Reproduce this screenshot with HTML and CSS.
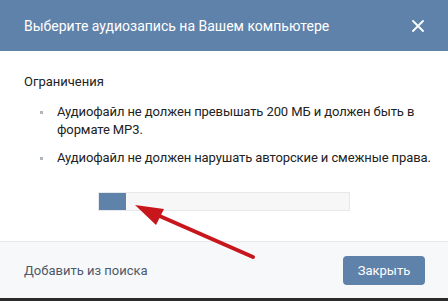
FILE: index.html
```html
<!DOCTYPE html>
<html lang="ru">
<head>
  <meta charset="UTF-8">
  <title>Выберите аудиозапись</title>
  <link rel="stylesheet" href="styles.css">
</head>
<body>

  <div class="box">
    <div class="box-header">
      <span class="box-title">Выберите аудиозапись на Вашем компьютере</span>
      <svg class="box-close" width="12" height="12" viewBox="0 0 12 12">
        <path d="M1 1 L11 11 M11 1 L1 11" stroke="#fff" stroke-width="1.8" stroke-linecap="round"/>
      </svg>
    </div>

    <div class="box-body">
      <div class="limits-title">Ограничения</div>
      <ul class="limits">
        <li>Аудиофайл не должен превышать 200 МБ и должен быть в формате MP3.</li>
        <li>Аудиофайл не должен нарушать авторские и смежные права.</li>
      </ul>
      <div class="upload-bar">
        <div class="upload-fill" style="width: 27px;"></div>
      </div>
    </div>

    <div class="box-footer">
      <a class="footer-link" href="#">Добавить из поиска</a>
      <button class="close-button">Закрыть</button>
    </div>

    <!-- red pointer arrow drawn over the dialog -->
    <svg class="pointer" width="448" height="301" viewBox="0 0 448 301">
      <line x1="253" y1="257" x2="155" y2="214" stroke="#c8161d" stroke-width="4" stroke-linecap="round"/>
      <polygon points="135,205 164,209 156,225" fill="#c8161d"/>
    </svg>
  </div>

</body>
</html>
```

FILE: styles.css
```css
body {
  margin: 0;
  padding: 0;
  background-color: #2b2b2b;
  font-family: Roboto, "Open Sans", Arial, sans-serif;
  font-size: 13px;
  color: #222;
}
.box {
  position: relative;
  width: 448px;
  height: 298px;
  background-color: white;
  display: flex;
  flex-direction: column;
}
.box-header {
  height: 51px;
  background-color: #5f82aa;
  display: flex;
  align-items: center;
  justify-content: space-between;
  padding: 0 24px;
}
.box-title {
  color: white;
  font-size: 14px;
}
.box-body {
  flex: 1;
  padding: 22px 8px 0 24px;
  line-height: 18px;
}
.limits-title {
  margin-bottom: 12px;
}
.limits {
  list-style: none;
  margin: 0;
  padding: 0 0 0 33px;
  letter-spacing: -0.1px;
}
.limits li {
  position: relative;
  margin-bottom: 10px;
}
.limits li::before {
  content: "";
  position: absolute;
  left: -17px;
  top: 8px;
  width: 3px;
  height: 3px;
  background-color: #b0b6bd;
}
.upload-bar {
  margin: 25px 0 0 74px;
  width: 250px;
  height: 17px;
  border: 1px solid #e7e8ec;
  background-color: #f7f7f7;
}
.upload-fill {
  height: 100%;
  background-color: #5f82aa;
}
.box-footer {
  height: 56px;
  border-top: 1px solid #e7e8ec;
  background-color: #f7f8fa;
  display: flex;
  align-items: center;
  justify-content: space-between;
  padding: 0 23px 0 24px;
}
.footer-link {
  color: #4c5a6b;
  text-decoration: none;
}
.close-button {
  width: 82px;
  height: 29px;
  background-color: #5f82aa;
  color: white;
  border: none;
  border-radius: 4px;
  font-family: inherit;
  font-size: 13px;
  cursor: pointer;
}
.pointer {
  position: absolute;
  left: 0;
  top: 0;
  pointer-events: none;
}
```
